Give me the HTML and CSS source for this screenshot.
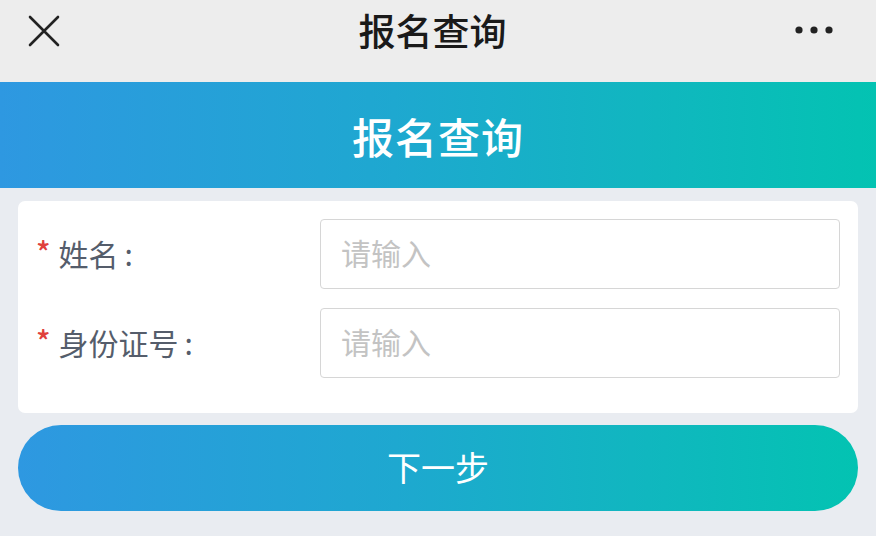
FILE: index.html
```html
<!DOCTYPE html>
<html lang="zh">
<head>
<meta charset="utf-8">
<title>报名查询</title>
<link rel="stylesheet" href="styles.css">
</head>
<body>
<div class="nav">
  <svg class="nav-close" width="32" height="32" viewBox="0 0 32 32"><path d="M2 2 L30 30 M30 2 L2 30" stroke="#222" stroke-width="2.6" stroke-linecap="round" fill="none"/></svg>
  <div class="nav-title">报名查询</div>
  <svg class="nav-more" width="40" height="10" viewBox="0 0 40 10"><circle cx="5" cy="5" r="3.6" fill="#222"/><circle cx="20" cy="5" r="3.6" fill="#222"/><circle cx="35" cy="5" r="3.6" fill="#222"/></svg>
</div>
<div class="banner">报名查询</div>
<div class="main">
  <div class="card">
    <div class="row">
      <label class="label"><span class="req">*</span>姓名<span class="colon">:</span></label>
      <input class="input" type="text" placeholder="请输入">
    </div>
    <div class="row">
      <label class="label"><span class="req">*</span>身份证号<span class="colon">:</span></label>
      <input class="input" type="text" placeholder="请输入">
    </div>
  </div>
  <button class="btn" type="button">下一步</button>
</div>
</body>
</html>
```
FILE: styles.css
```css
html, body {
  margin: 0;
  padding: 0;
}
body {
  width: 876px;
  height: 536px;
  overflow: hidden;
  background: #e9ecf1;
  font-family: "Noto Sans CJK SC", "Noto Sans", sans-serif;
}
.nav {
  height: 82px;
  background: #ededed;
  display: flex;
  align-items: center;
  justify-content: space-between;
  padding: 0 42px 0 28px;
  position: relative;
}
.nav-close {
  margin-top: -20px;
}
.nav-more {
  margin-top: -22px;
}
.nav-title {
  position: absolute;
  left: 0;
  right: 11px;
  top: 5px;
  text-align: center;
  font-size: 37px;
  line-height: 50px;
  color: #1a1a1a;
  font-weight: 500;
}
.banner {
  height: 106px;
  background: linear-gradient(90deg, #2e98e1 0%, #1ea8d0 45%, #10b7bf 75%, #03c3b2 100%);
  color: #fff;
  font-size: 42px;
  font-weight: 500;
  display: flex;
  align-items: center;
  justify-content: center;
  letter-spacing: 1px;
}
.main {
  padding: 13px 18px 0;
}
.card {
  background: #fff;
  border-radius: 7px;
  padding: 18px 18px 35px;
  display: flex;
  flex-direction: column;
  gap: 19px;
}
.row {
  display: flex;
  align-items: center;
  height: 70px;
}
.label {
  width: 284px;
  flex: none;
  font-size: 30px;
  color: #555d6b;
  display: flex;
  align-items: center;
  margin-top: -3px;
}
.colon {
  margin-left: 6px;
}
.req {
  color: #e0403c;
  font-size: 30px;
  font-weight: 500;
  margin-right: 8px;
  margin-top: -4px;
}
.input {
  flex: 1;
  height: 70px;
  box-sizing: border-box;
  border: 1.5px solid #d6d6d6;
  border-radius: 4px;
  padding: 0 20px 4px;
  font-size: 30px;
  font-family: "Noto Sans CJK SC", "Noto Sans", sans-serif;
  color: #333;
  background: #fff;
  outline: none;
}
.input::placeholder {
  color: #c3c3c3;
}
.btn {
  display: block;
  width: 100%;
  height: 86px;
  margin-top: 12px;
  border: none;
  border-radius: 43px;
  background: linear-gradient(90deg, #2e98e1 0%, #1ea8d0 45%, #10b7bf 75%, #03c3b2 100%);
  color: #fff;
  font-size: 34px;
  font-family: "Noto Sans CJK SC", "Noto Sans", sans-serif;
  padding: 0 0 4px;
}
```
